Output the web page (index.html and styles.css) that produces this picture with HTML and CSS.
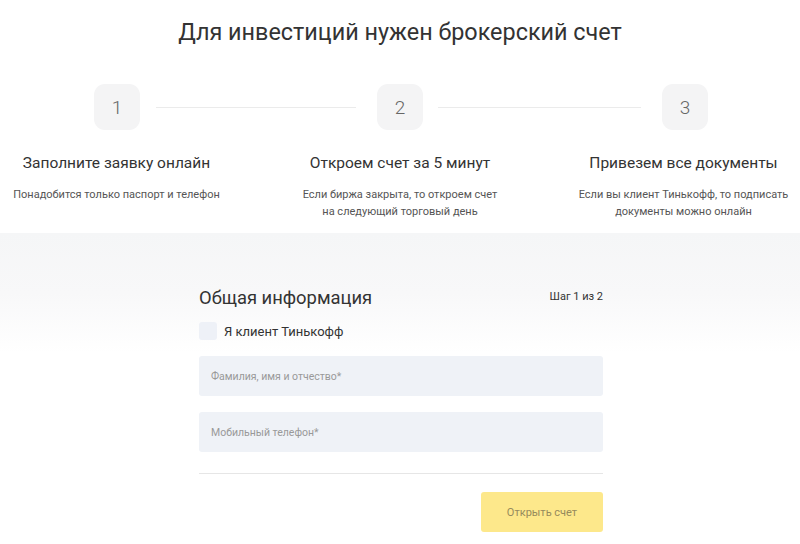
FILE: index.html
```html
<!DOCTYPE html>
<html lang="ru">
<head>
<meta charset="utf-8">
<title>Брокерский счет</title>
<link rel="stylesheet" href="styles.css">
</head>
<body>
<div class="page">
  <h1 class="title">Для инвестиций нужен брокерский счет</h1>

  <div class="track">
    <div class="num">1</div>
    <div class="line line-1"></div>
    <div class="num">2</div>
    <div class="line line-2"></div>
    <div class="num">3</div>
  </div>

  <div class="steps">
    <div class="step">
      <div class="step-title">Заполните заявку онлайн</div>
      <div class="step-text">Понадобится только паспорт и телефон</div>
    </div>
    <div class="step">
      <div class="step-title">Откроем счет за 5 минут</div>
      <div class="step-text">Если биржа закрыта, то откроем счет<br>на следующий торговый день</div>
    </div>
    <div class="step">
      <div class="step-title">Привезем все документы</div>
      <div class="step-text">Если вы клиент Тинькофф, то подписать<br>документы можно онлайн</div>
    </div>
  </div>

  <section class="form-section">
    <form class="form">
      <div class="form-head">
        <h2 class="form-title">Общая информация</h2>
        <span class="form-step">Шаг 1 из 2</span>
      </div>
      <label class="check">
        <span class="check-box"></span>
        <span class="check-label">Я клиент Тинькофф</span>
      </label>
      <div class="field">Фамилия, имя и отчество*</div>
      <div class="field">Мобильный телефон*</div>
      <div class="divider"></div>
      <div class="actions">
        <button type="button" class="btn">Открыть счет</button>
      </div>
    </form>
  </section>
</div>
</body>
</html>
```

FILE: styles.css
```css
* { box-sizing: border-box; }

html, body {
  margin: 0;
  padding: 0;
  background: #fff;
}

body {
  font-family: Roboto, "Liberation Sans", Arial, sans-serif;
  color: #333;
  width: 800px;
  height: 544px;
  overflow: hidden;
}

.page {
  display: flex;
  flex-direction: column;
}

.title {
  margin: 0;
  padding-top: 16px;
  font-size: 23.4px;
  line-height: 32px;
  font-weight: 400;
  text-align: center;
  color: #333;
}

.track {
  margin-top: 36px;
  margin-left: 94px;
  display: flex;
  align-items: center;
}

.num {
  width: 46px;
  height: 46px;
  border-radius: 11px;
  background: #f4f4f5;
  display: flex;
  align-items: center;
  justify-content: center;
  font-size: 19px;
  color: #666;
  font-weight: 300;
}

.line {
  height: 1px;
  background: #ebebeb;
  margin: 0 21px 0 16px;
}

.line-1 { width: 200px; }
.line-2 { width: 203px; margin-left: 15px; }

.steps {
  display: flex;
  justify-content: center;
  margin-top: 23px;
}

.step {
  flex: 0 0 284px;
  width: 284px;
  text-align: center;
}

.step:nth-child(2) { flex-basis: 283px; width: 283px; }

.step-title {
  font-size: 15.5px;
  line-height: 20px;
  color: #333;
}

.step-text {
  margin-top: 13px;
  font-size: 11px;
  line-height: 17px;
  color: #555;
}

.form-section {
  margin-top: 13px;
  height: 320px;
  background: linear-gradient(#f5f6f7 0px, #f8f8f9 60px, #ffffff 120px);
  padding-top: 53px;
}

.form {
  width: 404px;
  margin-left: 199px;
  display: flex;
  flex-direction: column;
}

.form-head {
  display: flex;
  justify-content: space-between;
  align-items: center;
}

.form-title {
  margin: 0;
  font-size: 18.4px;
  line-height: 24px;
  font-weight: 400;
  color: #333;
}

.form-step {
  font-size: 11px;
  color: #333;
  margin-top: -4px;
}

.check {
  margin-top: 12px;
  display: flex;
  align-items: center;
  gap: 7px;
  height: 18px;
}

.check-box {
  width: 18px;
  height: 18px;
  border-radius: 3px;
  background: #eef1f7;
}

.check-label {
  font-size: 13px;
  color: #333;
}

.field {
  margin-top: 16px;
  height: 40px;
  border-radius: 3px;
  background: #eff2f7;
  padding-left: 12px;
  display: flex;
  align-items: center;
  font-size: 10.5px;
  color: #999;
}

.divider {
  margin-top: 21px;
  height: 1px;
  background: #e6e6e6;
}

.actions {
  margin-top: 18px;
  display: flex;
  justify-content: flex-end;
}

.btn {
  width: 122px;
  height: 40px;
  border: 0;
  border-radius: 3px;
  background: #fde88b;
  color: #968a5c;
  font-family: inherit;
  font-size: 11px;
  padding: 0;
}
```
